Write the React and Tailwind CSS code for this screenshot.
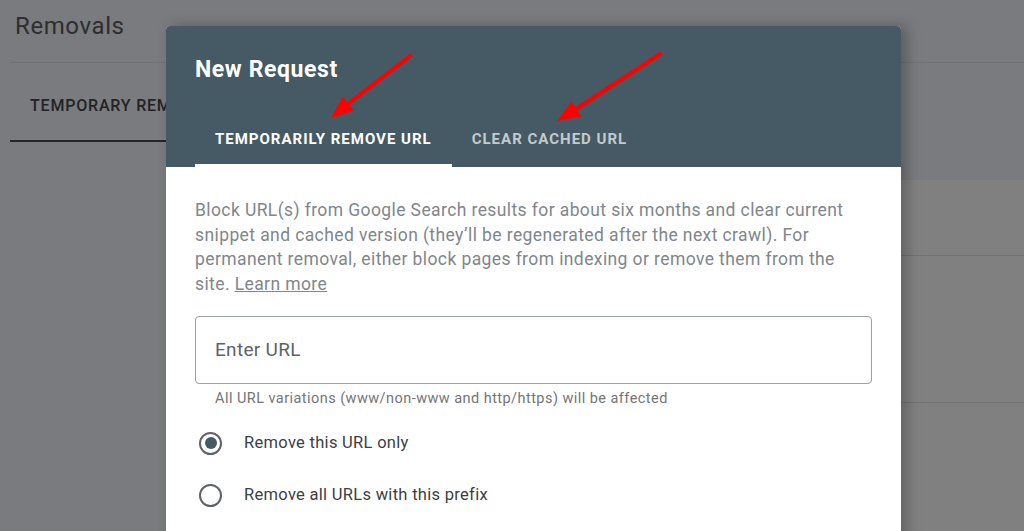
import React, { useState } from 'react';

const Arrow = ({ from, to, base, wingA, wingB }) => (
    <g>
        <line x1={from[0]} y1={from[1]} x2={base[0]} y2={base[1]} stroke="#ff0000" strokeWidth="4" strokeLinecap="square" />
        <polygon points={`${to[0]},${to[1]} ${wingA[0]},${wingA[1]} ${wingB[0]},${wingB[1]}`} fill="#ff0000" />
    </g>
);

const Radio = ({ checked, label, onClick }) => (
    <button onClick={onClick} className="flex items-center h-[52px] text-left">
        <span className="w-[23px] h-[23px] rounded-full border-2 border-[#5f6368] flex items-center justify-center ml-[4px]">
            {checked && <span className="w-[12px] h-[12px] rounded-full bg-[#455a64]" />}
        </span>
        <span className="ml-[22px] text-[16.5px] tracking-[0.3px] text-[#3c4043]">{label}</span>
    </button>
);

export default function App() {
    const [tab, setTab] = useState(0);
    const [mode, setMode] = useState(0);
    const [url, setUrl] = useState("");

    return (
        <div className="relative h-[531px] w-full overflow-hidden bg-[#7a7b7f] font-['Roboto',sans-serif]">
            {/* page behind the dialog */}
            <div className="pl-[10px]">
                <div className="h-[63px] border-b border-[#6f7074] pl-[5px] pt-[8px] text-[24px] tracking-[0.6px] text-[#2d2e30]">
                    Removals
                </div>
                <div className="flex">
                    <div className="w-[156px] h-[79px] border-b-2 border-[#26262a] pl-[20px] pt-[31px] text-[16px] font-medium tracking-[0.8px] text-[#222326] whitespace-nowrap">
                        TEMPORARY REMOVALS
                    </div>
                </div>
            </div>
            <div className="mt-[38px] ml-[180px] bg-[#808080]">
                <div className="h-[76px] border-b border-[#717171]" />
                <div className="h-[147px] border-b border-[#717171]" />
                <div className="h-[200px]" />
            </div>

            {/* dialog */}
            <div className="absolute left-[166px] top-[26px] w-[735px] h-[540px] rounded-t-[4px] overflow-hidden bg-white shadow-[6px_0_14px_rgba(0,0,0,0.25)]">
                <div className="h-[141px] bg-[#455a64] flex flex-col px-[29px]">
                    <h2 className="pt-[30px] text-[23px] leading-[28px] font-bold tracking-[0.6px] text-white">New Request</h2>
                    <div className="mt-auto flex">
                        <button
                            onClick={() => setTab(0)}
                            className={`h-[56px] px-[20px] pt-[3px] text-[15px] font-bold tracking-[1px] border-b-[3px] ${tab === 0 ? 'text-white border-white' : 'text-[#c3cacd] border-transparent'}`}
                        >
                            TEMPORARILY REMOVE URL
                        </button>
                        <button
                            onClick={() => setTab(1)}
                            className={`h-[56px] px-[20px] pt-[3px] text-[15px] font-bold tracking-[1px] border-b-[3px] ${tab === 1 ? 'text-white border-white' : 'text-[#c3cacd] border-transparent'}`}
                        >
                            CLEAR CACHED URL
                        </button>
                    </div>
                </div>

                <div className="px-[29px] pt-[31px]">
                    <p className="pr-[20px] text-[17.5px] leading-[24.5px] tracking-[0.4px] text-[#80868b]">
                        Block URL(s) from Google Search results for about six months and clear current snippet and cached version (they’ll be regenerated after the next crawl). For permanent removal, either block pages from indexing or remove them from the site. <a href="#" className="underline">Learn more</a>
                    </p>

                    <div className="mt-[20px] h-[68px] border border-[#9aa0a6] rounded-[4px] flex items-center px-[19px]">
                        <input
                            type="text"
                            placeholder="Enter URL"
                            value={url}
                            onChange={(e) => setUrl(e.target.value)}
                            className="w-full outline-none bg-transparent text-[19px] tracking-[0.3px] text-[#3c4043] placeholder:text-[#5f6368]"
                        />
                    </div>
                    <p className="pl-[20px] pt-[6px] text-[14.5px] leading-[17px] tracking-[0.45px] text-[#757575]">
                        All URL variations (www/non-www and http/https) will be affected
                    </p>

                    <div className="mt-[10px] flex flex-col">
                        <Radio checked={mode === 0} label="Remove this URL only" onClick={() => setMode(0)} />
                        <Radio checked={mode === 1} label="Remove all URLs with this prefix" onClick={() => setMode(1)} />
                    </div>
                </div>
            </div>

            {/* red annotation arrows */}
            <svg className="absolute inset-0 pointer-events-none" width="1024" height="531">
                <Arrow from={[410, 56]} to={[331, 118]} base={[348.4, 103.6]} wingA={[353.9, 110.7]} wingB={[342.9, 96.5]} />
                <Arrow from={[660, 54]} to={[557, 121]} base={[576.4, 108.9]} wingA={[581.3, 116.4]} wingB={[571.5, 101.4]} />
            </svg>
        </div>
    );
}
